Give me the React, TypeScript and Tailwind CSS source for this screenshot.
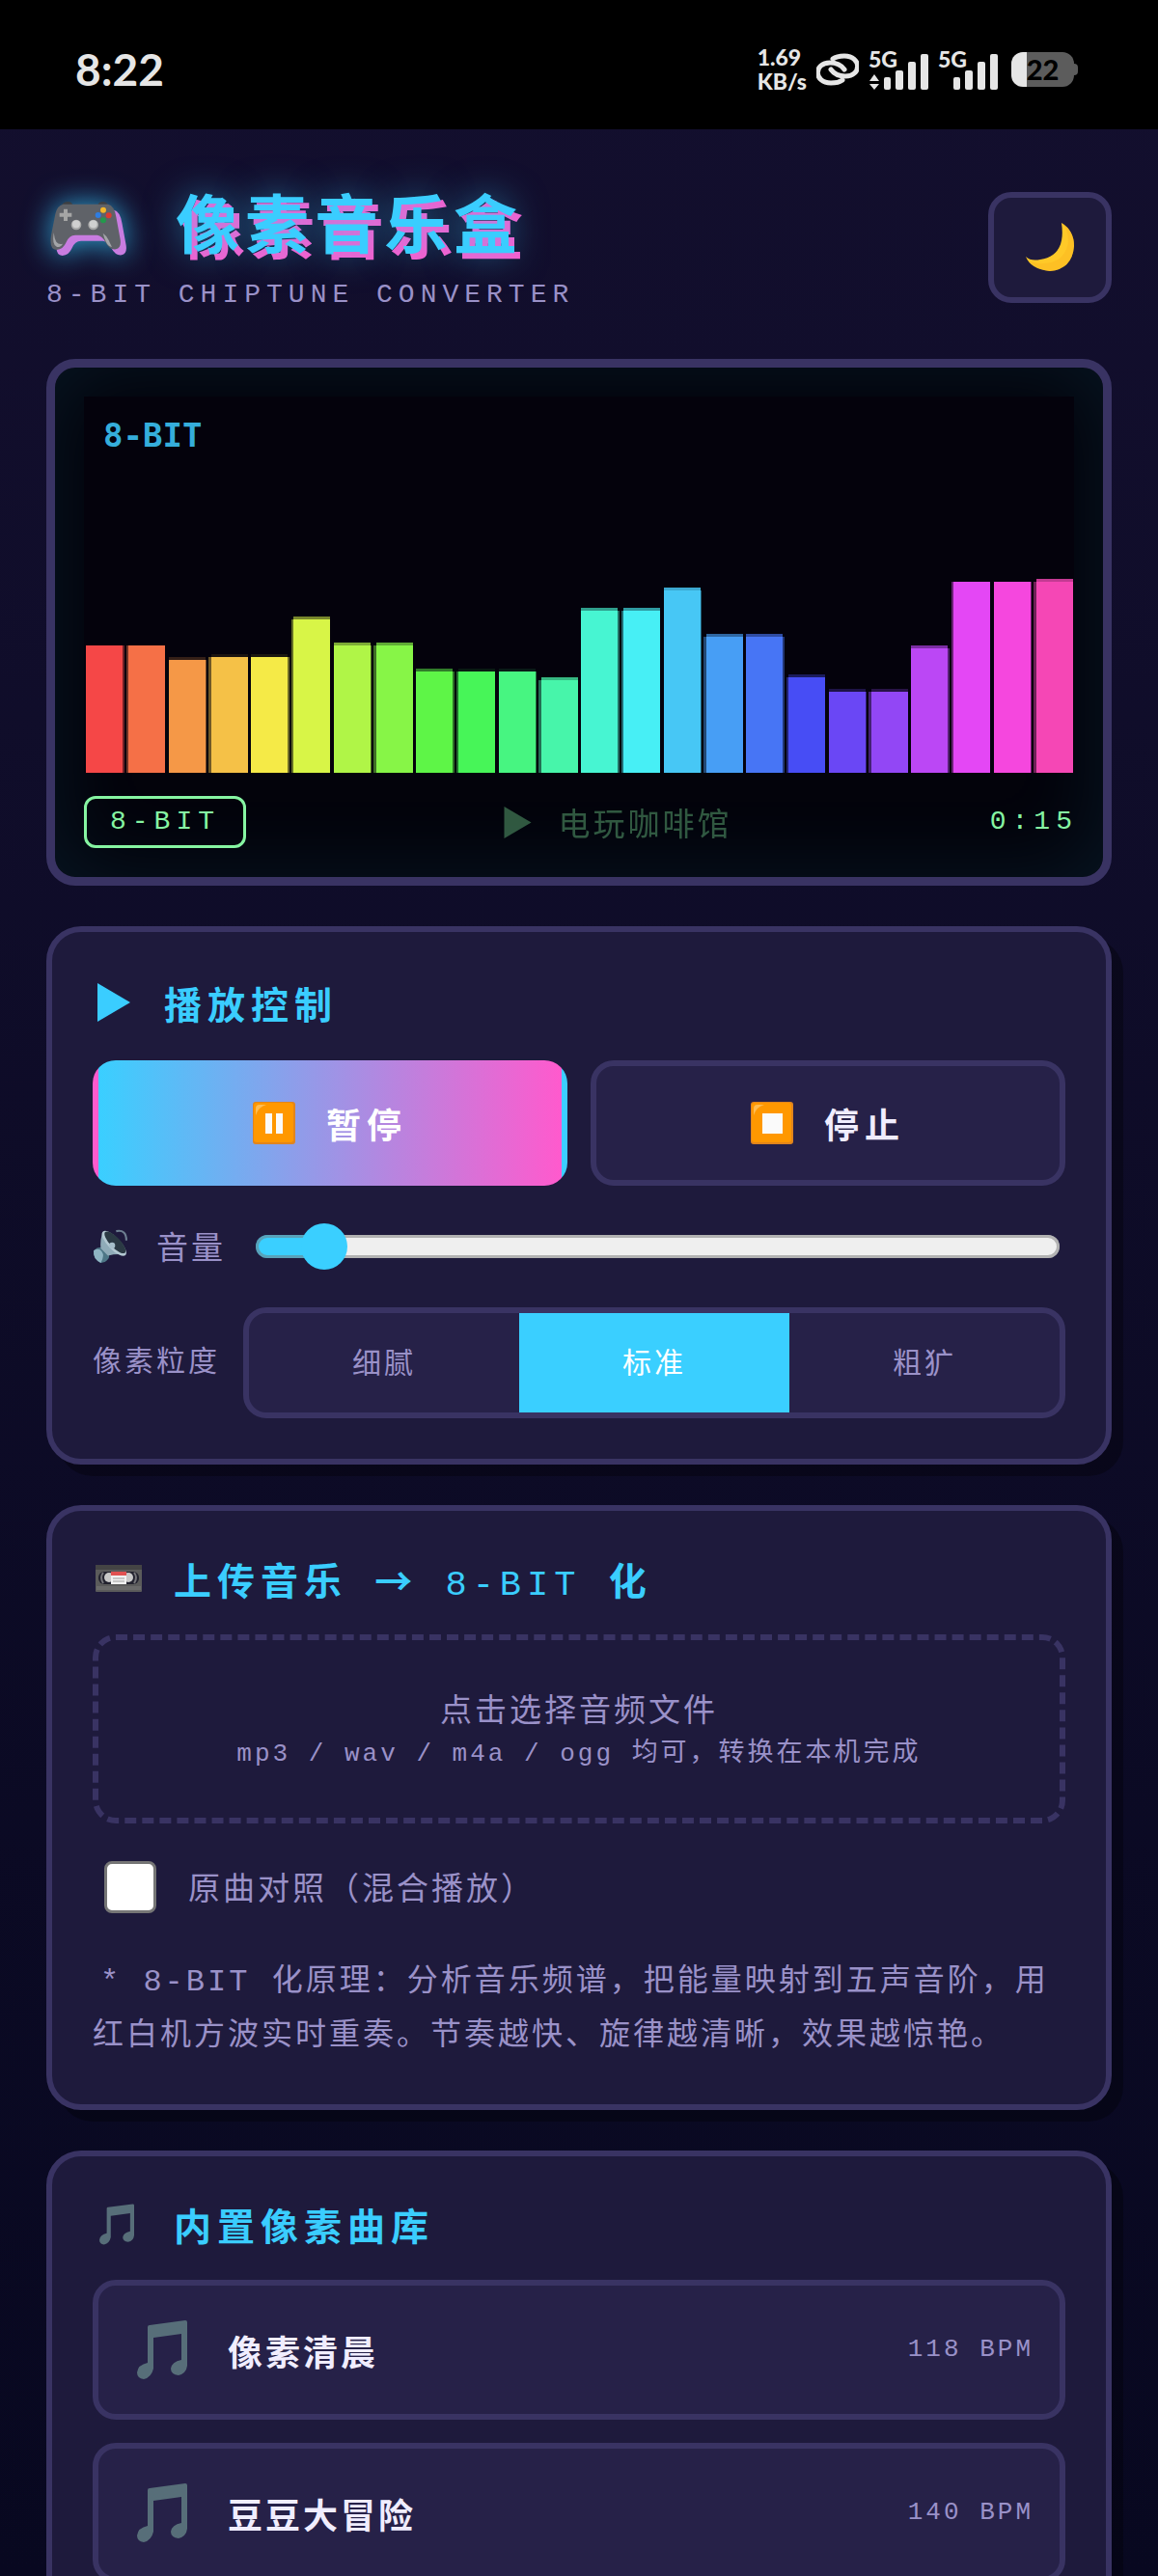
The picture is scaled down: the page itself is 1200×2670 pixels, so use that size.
import React, { useState } from 'react';

interface Song {
  id: string;
  name: string;
  bpm: number;
}

interface IconProps {
  className?: string;
}

const songs: Song[] = [
  { id: 'morning', name: '像素清晨', bpm: 118 },
  { id: 'adventure', name: '豆豆大冒险', bpm: 140 },
];

const grains = [
  { id: 'fine', label: '细腻' },
  { id: 'normal', label: '标准' },
  { id: 'rough', label: '粗犷' },
];

// height of each bar, and how bright its cap row is
const bars = [
  { h: 132, cap: 0 },
  { h: 132, cap: 0 },
  { h: 117, cap: 0.2 },
  { h: 120, cap: 0.1 },
  { h: 120, cap: 0.1 },
  { h: 159, cap: 0.55 },
  { h: 132, cap: 0.7 },
  { h: 132, cap: 0.7 },
  { h: 105, cap: 0.5 },
  { h: 105, cap: 0.1 },
  { h: 105, cap: 0.1 },
  { h: 96, cap: 0.75 },
  { h: 168, cap: 0.65 },
  { h: 168, cap: 0.65 },
  { h: 189, cap: 0.85 },
  { h: 141, cap: 0.65 },
  { h: 141, cap: 0.65 },
  { h: 99, cap: 0.35 },
  { h: 84, cap: 0.25 },
  { h: 84, cap: 0.25 },
  { h: 129, cap: 0.65 },
  { h: 198, cap: 0 },
  { h: 198, cap: 0 },
  { h: 198, cap: 0.8 },
];

// the bar grid repeats every four bars
const barOffsets = [
  { x: 2, edgeX: 39, edgeW: 3 },
  { x: 46, edgeX: 44, edgeW: 2 },
  { x: 88, edgeX: 125, edgeW: 2 },
  { x: 132, edgeX: 129, edgeW: 3 },
];

const Spectrum: React.FC = () => (
  <svg viewBox="0 0 1026 390" preserveAspectRatio="none" className="block h-full w-full" aria-hidden="true">
    {bars.map((bar, index) => {
      const slot = barOffsets[index % 4];
      const start = Math.floor(index / 4) * 171;
      const fill = `hsl(${index * 14}, 90%, 62%)`;
      return (
        <g key={index} fill={fill}>
          <rect x={start + slot.x} y={390 - bar.h} width={38} height={bar.h} />
          <rect x={start + slot.edgeX} y={390 - bar.h} width={slot.edgeW} height={bar.h} opacity={0.45} />
          <rect x={start + slot.x} y={387 - bar.h} width={38} height={3} opacity={bar.cap} />
        </g>
      );
    })}
  </svg>
);

const GamepadIcon: React.FC<IconProps> = ({ className }) => (
  <svg viewBox="68 116 222 154" className={className} aria-hidden="true">
    <path d="M104 132q2-14 20-14 12 0 14 12zM248 132q-2-14-16-14-14 0-16 12z" fill="#3c3f43" />
    <path
      d="M108 126Q90 130 84 156L71 222Q64 268 88 268Q108 267 118 244Q126 223 146 222H214Q230 224 240 244Q252 268 272 266Q290 262 286 236L273 165Q267 130 248 126Z"
      fill="#5f6268"
    />
    <path d="M110 141h12v12h13v12h-13v13h-12v-13H97v-12h13z" fill="#a5a5a5" />
    <circle cx="149" cy="190" r="16" fill="#a8a8a8" />
    <circle cx="149" cy="188" r="12" fill="#d0d0d0" />
    <circle cx="202" cy="190" r="16" fill="#a8a8a8" />
    <circle cx="202" cy="188" r="12" fill="#d0d0d0" />
    <circle cx="233" cy="144" r="9" fill="#f3b72b" />
    <circle cx="217" cy="160" r="9" fill="#2f7de1" />
    <circle cx="250" cy="161" r="9" fill="#d93a32" />
    <circle cx="233" cy="176" r="9" fill="#23994c" />
    <path d="M79 214q-6 40 10 45 12 1 18-10-12 4-20-6-6-10-8-29zM232 216q14 10 18 22 6 14 10 21-12-2-18-15-6-12-10-28z" fill="#a3a5a8" />
  </svg>
);

const MoonIcon: React.FC<IconProps> = ({ className }) => (
  <svg viewBox="0 0 50 50" className={className} aria-hidden="true">
    <path d="M37 0Q50 8 50 24Q48 48 25 50Q5 48 0 35Q5 40 15 38Q42 34 37 0Z" fill="#ffc928" />
    <path d="M37 0Q44 6 44 20Q40 44 12 42L4 40Q12 49 25 50Q48 48 50 24Q50 8 37 0Z" fill="#fbbb22" opacity="0.6" />
  </svg>
);

const NoteIcon: React.FC<IconProps> = ({ className }) => (
  <svg viewBox="0 0 52 61" className={className} fill="#576e79" aria-hidden="true">
    <path d="M13 5L50 0Q52 0 52 2V47Q51 55 43 57Q35 56 35 50Q36 43 46 41V14L17 18V50Q15 59 7 61Q0 60 0 54Q1 46 11 44V7Q11 5 13 5Z" />
  </svg>
);

const PlayIcon: React.FC<IconProps> = ({ className }) => (
  <svg viewBox="0 0 34 40" className={className} fill="currentColor" aria-hidden="true">
    <path d="M0 0L34 20L0 40Z" />
  </svg>
);

const KeycapIcon: React.FC<{ kind: 'pause' | 'stop' }> = ({ kind }) => (
  <svg viewBox="0 0 44 44" className="size-11" aria-hidden="true">
    <rect width="44" height="44" rx="3" fill="#e2851b" />
    <rect x="1" y="1" width="41" height="41" rx="3" fill="#ff9800" />
    <path d="M3 14V7Q3 3 7 3H14Q6 5 3 14Z" fill="#ffbd52" />
    {kind === 'pause' ? (
      <path d="M13 12h7v21h-7zM24 12h7v21h-7z" fill="#fafafa" />
    ) : (
      <rect x="12" y="12" width="21" height="21" fill="#fafafa" />
    )}
  </svg>
);

const SpeakerIcon: React.FC<IconProps> = ({ className }) => (
  <svg viewBox="0 0 34 34" className={className} aria-hidden="true">
    <path d="M1 21Q5 17 10 18L16 25Q17 29 12 32L8 33Q0 29 1 21Z" fill="#4d7686" />
    <path d="M1 21Q6 18 9 22T8 33Q0 29 1 21Z" fill="#8fb4c3" />
    <path d="M10 3Q7 10 8 19L15 26Q23 24 32 25Z" fill="#8fabb8" />
    <ellipse cx="21" cy="14" rx="16" ry="6" transform="rotate(46 21 14)" fill="#b3c8d2" />
    <ellipse cx="22" cy="13" rx="14" ry="5" transform="rotate(46 22 13)" fill="#2b3a44" />
    <circle cx="19" cy="16" r="3" fill="#a6bfca" />
    <path d="M23 2Q33 0 33 11" fill="none" stroke="#6d7f91" strokeWidth="2" />
  </svg>
);

const TapeIcon: React.FC<IconProps> = ({ className }) => (
  <svg viewBox="0 0 48 28" className={className} aria-hidden="true">
    <rect width="48" height="28" rx="1" fill="#5b5b5b" />
    <rect width="48" height="5" fill="#444" />
    <path d="M1 23h46M1 25h46" stroke="#7a7a7a" />
    <rect x="3" y="7" width="42" height="13" rx="6" fill="#23232f" />
    <circle cx="14" cy="13" r="5" fill="#c9c9c9" />
    <circle cx="34" cy="13" r="5" fill="#c9c9c9" />
    <path d="M8 8q-4 5 0 11M40 8q4 5 0 11" stroke="#77777c" strokeWidth="2" fill="none" />
    <rect x="16" y="7" width="16" height="13" fill="#f1f1f1" />
    <rect x="16" y="7" width="16" height="4" fill="#e05252" />
    <path d="M18 14h12M18 17h12" stroke="#9d9d9d" />
  </svg>
);

const Signal: React.FC<{ arrows?: boolean }> = ({ arrows }) => (
  <div className="relative h-11 w-[62px]">
    <svg viewBox="0 0 62 44" className="h-11 w-[62px]" fill="#e6e6e6" aria-hidden="true">
      {arrows && <path d="M6 27L11 34H1ZM1 37H11L6 43Z" />}
      <rect x="16" y="30" width="7" height="13" rx="2" />
      <rect x="28" y="23" width="8" height="20" rx="2" />
      <rect x="41" y="14" width="8" height="29" rx="2" />
      <rect x="54" y="6" width="8" height="37" rx="2" />
    </svg>
    <span className="absolute top-0 left-0 text-[23px] leading-[22px] font-black">5G</span>
  </div>
);

const StatusBar: React.FC = () => (
  <div className="flex shrink-0 items-center justify-between bg-black pt-[47px] pr-[83px] pb-[37px] pl-[78px] font-['Lato',sans-serif] text-[#e6e6e6]">
    <span className="text-[46px] leading-[44px] font-bold">8:22</span>
    <div className="flex items-center gap-2.5">
      <div className="text-[23px] leading-[25px] font-black">
        <div>1.69</div>
        <div>KB/s</div>
      </div>
      <svg viewBox="0 0 44 34" className="h-[34px] w-11" fill="none" stroke="#e6e6e6" strokeWidth="5" strokeLinecap="round" aria-hidden="true">
        <path d="M17 6Q21 3 29 3C47 3 47 24 30 24Q20 24 15 17" />
        <path d="M27 28Q23 31 15 31C-3 31 -3 10 14 10Q24 10 29 17" />
      </svg>
      <Signal arrows />
      <Signal />
      <div className="ml-1 flex items-center">
        <div className="flex h-9 w-[65px] items-center justify-center rounded-xl bg-[linear-gradient(90deg,#e6e6e6_16px,#5c5c5c_16px)] text-[29px] leading-9 font-black text-black">
          22
        </div>
        <div className="h-3 w-1 rounded-r bg-[#5c5c5c]" />
      </div>
    </div>
  </div>
);

const Card: React.FC<{ children: React.ReactNode }> = ({ children }) => (
  <section className="mt-[42px] rounded-[36px] border-[6px] border-[#393363] bg-[#1e1a3c] p-[42px] shadow-[12px_12px_0_rgba(0,0,0,0.3)]">
    {children}
  </section>
);

const headingClass = 'mb-[30px] flex items-center text-[39px] leading-[56px] font-bold tracking-[6px] text-[#3acdff]';
const monoClass = "font-['Liberation_Mono',monospace]";

export default function App() {
  const [playing, setPlaying] = useState(true);
  const [volume, setVolume] = useState(6);
  const [grain, setGrain] = useState('normal');
  const [mix, setMix] = useState(false);

  return (
    <div className="flex h-screen flex-col overflow-hidden bg-linear-to-b from-[#130f2e] to-[#080820] font-['Noto_Sans_CJK_SC',sans-serif] text-[#9a91c8]">
      <StatusBar />

      <main className="min-h-0 flex-1 overflow-y-auto px-12 pt-12 [scrollbar-width:none]">
        <header className="flex items-center justify-between">
          <div>
            <h1 className="flex items-center text-[66px] leading-[92px] font-bold tracking-[6px] text-[#3acdff] [text-shadow:0_0_36px_rgba(58,205,255,0.5),6px_6px_0_#ff5acd]">
              <GamepadIcon className="mt-3 mr-14 ml-1 h-[52px] w-[74px] [filter:drop-shadow(6px_6px_0_#c87ce0)_drop-shadow(0_0_15px_rgba(58,205,255,0.8))]" />
              像素音乐盒
            </h1>
            <p className={`${monoClass} mt-2 text-[28px] leading-[48px] tracking-[6px]`}>8-BIT CHIPTUNE CONVERTER</p>
          </div>
          <button
            aria-label="切换主题"
            className="flex h-[115px] w-32 items-center justify-center rounded-3xl border-[6px] border-[#393363] bg-[#1e1a3c]"
          >
            <MoonIcon className="size-[50px]" />
          </button>
        </header>

        {/* Screen */}
        <section className="mt-[42px] rounded-[30px] border-[9px] border-[#393363] bg-[#03030b] p-[30px] shadow-[inset_0_0_90px_rgba(58,205,255,0.1)]">
          <div className="relative h-[390px] bg-[#04020c]">
            <Spectrum />
            <span className="absolute top-5 left-5 font-['DejaVu_Sans_Mono',monospace] text-[34px] leading-10 font-bold text-[#35aedb]">
              8-BIT
            </span>
          </div>
          <div className="mt-6 -mr-1 flex items-center justify-between text-[28px] leading-12 tracking-[6px] text-[#86f5a2]">
            <span className={`${monoClass} rounded-xl border-[3px] border-[#86f5a2] px-6`}>8-BIT</span>
            <span className="flex items-center text-[33px] tracking-[3px] opacity-35">
              <PlayIcon className="mr-[27px] h-[33px] w-[29px]" />
              电玩咖啡馆
            </span>
            <span className={monoClass}>0:15</span>
          </div>
        </section>

        {/* Playback */}
        <Card>
          <h2 className={headingClass}>
            <span className="flex h-[61px] items-center pr-[35px] pl-[5px]">
              <PlayIcon className="h-10 w-[34px]" />
            </span>
            播放控制
          </h2>
          <div className="grid grid-cols-2 gap-6 text-[36px] font-bold tracking-[6px] text-[#f0edff]">
            <button
              onClick={() => setPlaying(!playing)}
              className="flex h-[130px] items-center justify-center gap-8 rounded-3xl border-[6px] border-transparent bg-[linear-gradient(90deg,#3acfff,#ff5acd)] text-white"
            >
              <KeycapIcon kind="pause" />
              暂停
            </button>
            <button
              onClick={() => setPlaying(false)}
              className="flex h-[130px] items-center justify-center gap-8 rounded-3xl border-[6px] border-[#393363] bg-[#262148]"
            >
              <KeycapIcon kind="stop" />
              停止
            </button>
          </div>

          <div className="my-9 flex h-[54px] items-center">
            <label htmlFor="volume" className="flex items-center text-[33px] tracking-[3px]">
              <SpeakerIcon className="mr-[30px] size-9" />
              音量
            </label>
            <input
              id="volume"
              type="range"
              min={0}
              max={100}
              value={volume}
              onChange={(e) => setVolume(Number(e.target.value))}
              style={{ '--fill': `${volume + 2}%` } as React.CSSProperties}
              className="mr-1.5 ml-[31px] h-12 min-w-0 flex-1 appearance-none bg-transparent [&::-webkit-slider-runnable-track]:h-6 [&::-webkit-slider-runnable-track]:rounded-full [&::-webkit-slider-runnable-track]:bg-[linear-gradient(90deg,#3acfff_var(--fill),#efefef_var(--fill))] [&::-webkit-slider-runnable-track]:shadow-[inset_0_0_0_3px_rgba(118,118,118,0.5)] [&::-webkit-slider-thumb]:-mt-3 [&::-webkit-slider-thumb]:size-12 [&::-webkit-slider-thumb]:appearance-none [&::-webkit-slider-thumb]:rounded-full [&::-webkit-slider-thumb]:bg-[#3acfff]"
            />
          </div>

          <div className="flex items-center gap-6 text-[30px] tracking-[3px]">
            <span className="pb-2">像素粒度</span>
            <div className="grid h-[115px] flex-1 grid-cols-3 overflow-hidden rounded-3xl border-[6px] border-[#393363] bg-[#262148]">
              {grains.map((item) => (
                <button
                  key={item.id}
                  onClick={() => setGrain(item.id)}
                  className={grain === item.id ? 'bg-[#3acfff] pb-1 text-white' : 'pb-1'}
                >
                  {item.label}
                </button>
              ))}
            </div>
          </div>
        </Card>

        {/* Upload */}
        <Card>
          <h2 className={headingClass}>
            <TapeIcon className="mr-[33px] ml-[3px] h-7 w-12" />
            <span>
              上传音乐<span className={`${monoClass} text-[37px] leading-none`}> </span>→
              <span className={`${monoClass} text-[37px] leading-none font-normal`}> 8-BIT </span>化
            </span>
          </h2>
          <button className="block w-full rounded-3xl border-[6px] border-dashed border-[#393363] pt-[46px] pb-[50px] text-center tracking-[3px]">
            <span className="block text-[33px] leading-12">点击选择音频文件</span>
            <span className="block text-[27px] leading-10">
              <span className={`${monoClass} text-[26px] leading-none`}>mp3 / wav / m4a / ogg </span>均可，转换在本机完成
            </span>
          </button>
          <label className="mt-9 flex h-[60px] items-center pl-3 text-[33px] tracking-[3px]">
            <input
              type="checkbox"
              checked={mix}
              onChange={(e) => setMix(e.target.checked)}
              className="mr-[33px] size-[54px] appearance-none rounded-lg border-[3px] border-[#767676] bg-white checked:bg-[#3acfff]"
            />
            原曲对照（混合播放）
          </label>
          <p className="mt-[41px] indent-2 font-['Liberation_Mono','Noto_Sans_CJK_SC',monospace] text-[32px] leading-[56px] tracking-[3px]">
            * 8-BIT 化原理：分析音乐频谱，把能量映射到五声音阶，用红白机方波实时重奏。节奏越快、旋律越清晰，效果越惊艳。
          </p>
        </Card>

        {/* Library */}
        <Card>
          <h2 className={headingClass}>
            <NoteIcon className="mr-[41px] ml-[7px] h-[43px] w-9" />
            内置像素曲库
          </h2>
          <ul className="flex flex-col gap-6">
            {songs.map((song) => (
              <li key={song.id}>
                <button className="flex h-[145px] w-full items-center rounded-3xl border-[6px] border-[#393363] bg-[#262148] pr-[27px] pl-10 text-left tracking-[3px]">
                  <NoteIcon className="mr-[42px] h-[61px] w-[52px]" />
                  <span className="flex-1 text-[36px] font-bold text-[#f0edff]">{song.name}</span>
                  <span className={`${monoClass} text-[26px]`}>{song.bpm} BPM</span>
                </button>
              </li>
            ))}
          </ul>
        </Card>
      </main>
    </div>
  );
}
